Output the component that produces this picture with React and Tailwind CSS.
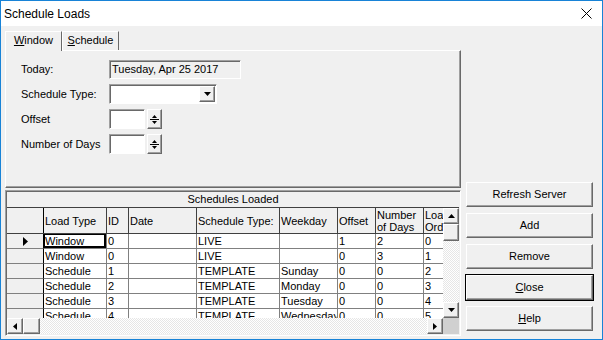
import React from "react"

const font = "[font-family:'Liberation_Sans',Arial,sans-serif]"
const raised =
  "border border-t-white border-l-white border-b-[#696969] border-r-[#696969] shadow-[inset_-1px_-1px_#a0a0a0] bg-[#f0f0f0]"
const sunken =
  "border border-t-[#a0a0a0] border-l-[#a0a0a0] border-b-white border-r-white shadow-[inset_1px_1px_#696969]"
const track = "bg-[repeating-conic-gradient(#ffffff_0%_25%,#e6e6e6_0%_50%)] bg-[length:2px_2px]"

function Tri({ dir, w = 7, h = 4 }) {
  const pts = {
    up: `0,${h} ${w},${h} ${w / 2},0`,
    down: `0,0 ${w},0 ${w / 2},${h}`,
    right: `0,0 0,${h} ${w},${h / 2}`,
    left: `${w},0 ${w},${h} 0,${h / 2}`,
  }[dir]
  return (
    <svg width={w} height={h} viewBox={`0 0 ${w} ${h}`} className="block">
      <polygon points={pts} fill="#000" />
    </svg>
  )
}

function ArrowBtn({ dir }) {
  const horiz = dir === "left" || dir === "right"
  return (
    <div className={`${raised} w-[16px] h-[16px] flex items-center justify-center shrink-0`}>
      {horiz ? <Tri dir={dir} w={4} h={7} /> : <Tri dir={dir} />}
    </div>
  )
}

function Spinner() {
  return (
    <div className="flex items-center">
      <div className={`${sunken} w-[36px] h-[20px] bg-white`} />
      <div className={`${raised} ml-[2px] w-[15px] h-[20px] flex flex-col items-center justify-center gap-[1px]`}>
        <Tri dir="up" w={5} h={3} />
        <div className="w-[9px] h-px bg-black" />
        <Tri dir="down" w={5} h={3} />
      </div>
    </div>
  )
}

const cols = [
  { key: "type", label: "Load Type", w: "w-[63px]" },
  { key: "id", label: "ID", w: "w-[22px]" },
  { key: "date", label: "Date", w: "w-[68px]" },
  { key: "stype", label: "Schedule Type:", w: "w-[83px]" },
  { key: "day", label: "Weekday", w: "w-[58px]" },
  { key: "offset", label: "Offset", w: "w-[38px]" },
  { key: "days", label: "Number of Days", w: "w-[48px]" },
  { key: "ord", label: "Load Order", w: "w-[40px]" },
]

const rows = [
  { type: "Window", id: "0", date: "", stype: "LIVE", day: "", offset: "1", days: "2", ord: "0" },
  { type: "Window", id: "0", date: "", stype: "LIVE", day: "", offset: "0", days: "3", ord: "1" },
  { type: "Schedule", id: "1", date: "", stype: "TEMPLATE", day: "Sunday", offset: "0", days: "0", ord: "2" },
  { type: "Schedule", id: "2", date: "", stype: "TEMPLATE", day: "Monday", offset: "0", days: "0", ord: "3" },
  { type: "Schedule", id: "3", date: "", stype: "TEMPLATE", day: "Tuesday", offset: "0", days: "0", ord: "4" },
  { type: "Schedule", id: "4", date: "", stype: "TEMPLATE", day: "Wednesday", offset: "0", days: "0", ord: "5" },
]

function Grid() {
  return (
    <div className={`${sunken} mt-[2px] h-[146px] w-[456px] flex flex-col bg-[#f0f0f0] p-px`}>
      <div className="h-[16px] shrink-0 border-b border-[#404040] flex items-center justify-center leading-none">
        Schedules Loaded
      </div>
      <div className="flex h-[110px] shrink-0">
        <div className="w-[436px] overflow-hidden">
          <div className="flex h-[26px] border-b border-[#404040] w-max">
            <div className="w-[37px] border-r border-black shrink-0" />
            {cols.map((c) => (
              <div
                key={c.key}
                className={`${c.w} shrink-0 border-r border-[#404040] pl-[1px] flex items-center leading-[12px] overflow-hidden`}
              >
                {c.label}
              </div>
            ))}
          </div>
          {rows.map((r, i) => (
            <div key={i} className="flex h-[15px] w-max">
              <div className="w-[37px] shrink-0 border-r border-black border-b border-b-[#808080] flex items-center justify-center">
                {i === 0 && <Tri dir="right" w={5} h={9} />}
              </div>
              {cols.map((c) => (
                <div
                  key={c.key}
                  className={`${c.w} shrink-0 bg-white border-r border-b border-[#808080] pl-[1px] leading-[14px] whitespace-nowrap overflow-hidden ${
                    i === 0 && c.key === "type" ? "shadow-[inset_0_0_0_1px_#000,inset_-1px_-1px_0_1px_#000]" : ""
                  }`}
                >
                  {r[c.key]}
                </div>
              ))}
            </div>
          ))}
        </div>
        <div className="w-[16px] flex flex-col">
          <ArrowBtn dir="up" />
          <div className={`${raised} h-[17px]`} />
          <div className={`flex-1 ${track}`} />
          <ArrowBtn dir="down" />
        </div>
      </div>
      <div className="flex h-[16px] shrink-0">
        <ArrowBtn dir="left" />
        <div className={`${raised} w-[17px] h-[16px]`} />
        <div className={`flex-1 ${track}`} />
        <ArrowBtn dir="right" />
        <div className="w-[16px] h-[16px] bg-[#d0d0d0]" />
      </div>
    </div>
  )
}

function Button({ children, def }) {
  const btn = (
    <div className={`${raised} h-[25px] w-[127px] flex items-center justify-center`}>{children}</div>
  )
  if (def) return <div className="-mx-px -my-px border border-black">{btn}</div>
  return btn
}

export default function App() {
  return (
    <div className={`${font} text-[11px] text-black w-[603px] h-[340px] border border-[#1883d7] flex flex-col bg-[#f0f0f0]`}>
      <div className="h-[25px] bg-white flex items-center justify-between pl-[3px] pr-[10px] shrink-0">
        <span className="text-[12px]">Schedule Loads</span>
        <svg width="11" height="11" viewBox="0 0 11 11">
          <path d="M0.5 0.5 L10.5 10.5 M10.5 0.5 L0.5 10.5" stroke="#000" strokeWidth="1" />
        </svg>
      </div>
      <div className="flex flex-1">
        <div className="pl-[4px] pt-[5px] flex flex-col">
          <div className="flex h-[19px]">
            <div className="relative z-10 h-[20px] w-[57px] bg-[#f0f0f0] border-t border-l border-white border-r border-r-[#696969] flex items-center justify-center pb-[2px]">
              <span><u>W</u>indow</span>
            </div>
            <div className="h-[19px] w-[57px] border-t border-l border-white border-r border-r-[#696969] flex items-center justify-center pb-[1px]">
              <span><u>S</u>chedule</span>
            </div>
          </div>
          <div className="h-[138px] w-[456px] border border-t-white border-l-white border-b-[#696969] border-r-[#696969] shadow-[inset_-1px_-1px_#a0a0a0] pl-[15px] pt-[8px] flex flex-col gap-[5px]">
            <div className="flex items-center h-[20px]">
              <span className="w-[88px]">Today:</span>
              <div className={`${sunken} w-[132px] h-[19px] pl-[2px] flex items-center`}>Tuesday, Apr 25 2017</div>
            </div>
            <div className="flex items-center h-[20px]">
              <span className="w-[88px]">Schedule Type:</span>
              <div className={`${sunken} w-[108px] h-[20px] bg-white flex justify-end items-center pr-px`}>
                <div className={`${raised} w-[16px] h-[16px] flex items-center justify-center`}>
                  <Tri dir="down" />
                </div>
              </div>
            </div>
            <div className="flex items-center h-[20px]">
              <span className="w-[88px]">Offset</span>
              <Spinner />
            </div>
            <div className="flex items-center h-[20px]">
              <span className="w-[88px]">Number of Days</span>
              <Spinner />
            </div>
          </div>
          <Grid />
        </div>
        <div className="ml-[5px] pt-[156px] flex flex-col gap-[6px]">
          <Button>Refresh Server</Button>
          <Button>Add</Button>
          <Button>Remove</Button>
          <Button def><u>C</u>lose</Button>
          <Button><u>H</u>elp</Button>
        </div>
      </div>
    </div>
  )
}
